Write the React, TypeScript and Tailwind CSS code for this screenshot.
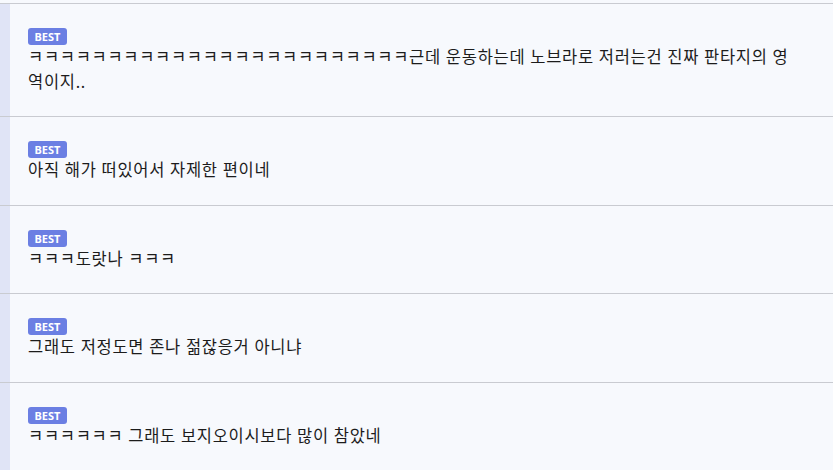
import React from 'react'

interface Comment {
  id: number
  body: string
}

const comments: Comment[] = [
  { id: 1, body: 'ㅋㅋㅋㅋㅋㅋㅋㅋㅋㅋㅋㅋㅋㅋㅋㅋㅋㅋㅋㅋㅋㅋㅋㅋ근데 운동하는데 노브라로 저러는건 진짜 판타지의 영역이지..' },
  { id: 2, body: '아직 해가 떠있어서 자제한 편이네' },
  { id: 3, body: 'ㅋㅋㅋ도랏나 ㅋㅋㅋ' },
  { id: 4, body: '그래도 저정도면 존나 젊잖응거 아니냐' },
  { id: 5, body: 'ㅋㅋㅋㅋㅋㅋ 그래도 보지오이시보다 많이 참았네' },
]

const BestBadge: React.FC = () => (
  <div className="flex h-[17px] w-[39px] items-center justify-center rounded-[3px] bg-[#6b7fe3] text-[11px] font-bold leading-none text-white">
    BEST
  </div>
)

const CommentRow: React.FC<{ comment: Comment }> = ({ comment }) => (
  <div className="flex border-t border-[#c9cbd1]">
    <div className="w-[10px] shrink-0 bg-[#e0e4f6]" />
    <div className="flex-1 pl-[18px] pr-[30px] pt-[24px] pb-[22px]">
      <BestBadge />
      <p className="text-[16.5px] leading-[24.5px] tracking-[0.7px] text-[#1c1c1c]">{comment.body}</p>
    </div>
  </div>
)

export default function App() {
  return (
    <div
      className="h-[470px] w-[833px] overflow-hidden bg-[#f7f9fd] pt-[3px]"
      style={{ fontFamily: '"Noto Sans", "Noto Sans CJK KR", sans-serif' }}
    >
      {comments.map(c => (
        <CommentRow key={c.id} comment={c} />
      ))}
    </div>
  )
}
